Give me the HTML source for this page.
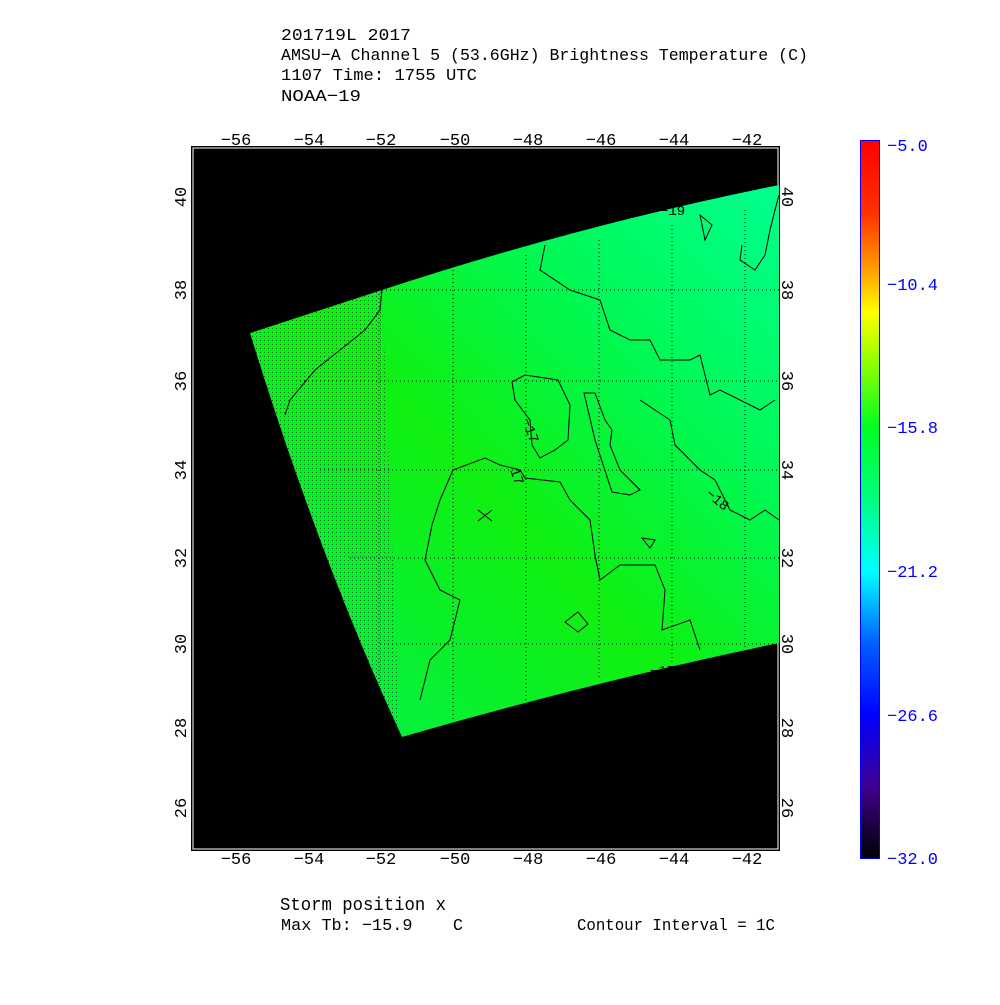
<!DOCTYPE html>
<html><head><meta charset="utf-8"><style>
body{margin:0;background:#fff;}
svg text{font-family:"Liberation Mono",monospace;white-space:pre;}
</style></head><body>
<svg width="1000" height="1000" viewBox="0 0 1000 1000" xmlns="http://www.w3.org/2000/svg">
<defs>
<linearGradient id="g1" x1="0" y1="1" x2="1" y2="0">
<stop offset="0" stop-color="#00f050"/>
<stop offset="0.45" stop-color="#10f010"/>
<stop offset="0.7" stop-color="#00f850"/>
<stop offset="1" stop-color="#00ff90"/>
</linearGradient>
<linearGradient id="cb" x1="0" y1="0" x2="0" y2="1">
<stop offset="0" stop-color="#ff0000"/>
<stop offset="0.1" stop-color="#ff3000"/>
<stop offset="0.18" stop-color="#ffa000"/>
<stop offset="0.24" stop-color="#ffff00"/>
<stop offset="0.3" stop-color="#a0ff00"/>
<stop offset="0.4" stop-color="#00ff20"/>
<stop offset="0.5" stop-color="#00ff80"/>
<stop offset="0.6" stop-color="#00ffff"/>
<stop offset="0.7" stop-color="#0060ff"/>
<stop offset="0.8" stop-color="#0000ff"/>
<stop offset="0.9" stop-color="#400090"/>
<stop offset="1" stop-color="#000000"/>
</linearGradient>
<pattern id="dots" width="4" height="4" patternUnits="userSpaceOnUse"><rect x="0" y="0" width="1" height="1" fill="#000"/></pattern>
</defs>
<g font-size="17" fill="#000">
<text x="281" y="40" textLength="130" lengthAdjust="spacingAndGlyphs">201719L 2017</text>
<text x="281" y="60" textLength="527" lengthAdjust="spacingAndGlyphs">AMSU−A Channel 5 (53.6GHz) Brightness Temperature (C)</text>
<text x="281" y="80" textLength="196" lengthAdjust="spacingAndGlyphs">1107 Time: 1755 UTC</text>
<text x="281" y="101" textLength="80" lengthAdjust="spacingAndGlyphs">NOAA−19</text>
</g>
<rect x="191" y="146" width="589" height="705" fill="#000"/>
<rect x="193" y="148" width="585" height="701" fill="none" stroke="#fff" stroke-width="1"/>
<rect x="194" y="149" width="583" height="699" fill="#000"/>
<path d="M250,333 L382,290 Q580,225 779,185 L779,643 Q600,680 402,737 Q320,560 250,333 Z" fill="url(#g1)"/>
<path d="M250,333 L382,290 L400,740 Q320,560 250,333Z" fill="url(#dots)" opacity="0.6"/>
<g stroke="#000" stroke-width="1" stroke-dasharray="1,3" fill="none">
<path d="M379,290V737M453,270V720M526,255V700M599,240V680M672,225V665M745,210V650"/>
<path d="M382,290H779M300,381H779M320,470H779M350,558H779M380,644H779"/>
</g>
<g stroke="#000" stroke-width="1" fill="none">
<path d="M382,290L380,310L365,330L340,350L315,370L290,400L285,415"/>
<path d="M453,470L485,458L500,465L520,470L525,478L560,482L570,500L590,520L595,555L600,580L620,565L655,565L665,590L662,630L690,620L700,650"/>
<path d="M453,470L440,500L432,525L425,560L440,590L460,600L450,640L430,660L420,700"/>
<path d="M512,382L525,375L558,380L570,405L568,440L555,450L540,458L532,445L530,420L515,400Z"/>
<path d="M584,393L595,393L605,420L612,430L610,445L620,470L640,490L630,495L612,492L595,440Z"/>
<path d="M545,245L540,270L570,290L600,300L610,330L630,340L650,340L660,360L690,360L700,355L710,395L720,390L740,400L760,410L775,400"/>
<path d="M742,245L740,260L755,270L765,255L770,230L775,210L779,195"/>
<path d="M640,400L670,420L675,445L700,470L715,480L730,510L750,520L765,510L779,520"/>
<path d="M700,215L705,240L712,225Z"/>
<path d="M642,538L650,548L655,540Z"/>
<path d="M565,622L578,612L588,624L578,632Z"/>
<path d="M478,510L492,521M492,510L478,521"/>
</g>
<g font-size="14" fill="#000">
<text x="522" y="420" transform="rotate(70 522 420)">−17</text>
<text x="510" y="470" transform="rotate(70 510 470)">17</text>
<text x="705" y="495" transform="rotate(40 705 495)">−18</text>
<text x="650" y="675">−17</text>
<text x="660" y="215">−19</text>
</g>
<g font-size="17" fill="#000" text-anchor="middle">
<text x="236" y="145">−56</text><text x="309" y="145">−54</text><text x="381" y="145">−52</text><text x="455" y="145">−50</text><text x="528" y="145">−48</text><text x="601" y="145">−46</text><text x="674" y="145">−44</text><text x="747" y="145">−42</text>
<text x="236" y="864">−56</text><text x="309" y="864">−54</text><text x="381" y="864">−52</text><text x="455" y="864">−50</text><text x="528" y="864">−48</text><text x="601" y="864">−46</text><text x="674" y="864">−44</text><text x="747" y="864">−42</text>
</g>
<g font-size="17" fill="#000" text-anchor="middle">
<text transform="translate(186,197) rotate(-90)">40</text>
<text transform="translate(186,290) rotate(-90)">38</text>
<text transform="translate(186,381) rotate(-90)">36</text>
<text transform="translate(186,470) rotate(-90)">34</text>
<text transform="translate(186,558) rotate(-90)">32</text>
<text transform="translate(186,644) rotate(-90)">30</text>
<text transform="translate(186,728) rotate(-90)">28</text>
<text transform="translate(186,808) rotate(-90)">26</text>
<text transform="translate(782,197) rotate(90)">40</text>
<text transform="translate(782,290) rotate(90)">38</text>
<text transform="translate(782,381) rotate(90)">36</text>
<text transform="translate(782,470) rotate(90)">34</text>
<text transform="translate(782,558) rotate(90)">32</text>
<text transform="translate(782,644) rotate(90)">30</text>
<text transform="translate(782,728) rotate(90)">28</text>
<text transform="translate(782,808) rotate(90)">26</text>
</g>
<rect x="860.5" y="140.5" width="19" height="718" fill="url(#cb)" stroke="#0000ff" stroke-width="1"/>
<g fill="#0000ff" font-size="17">
<text x="887" y="151">−5.0</text>
<text x="887" y="290">−10.4</text>
<text x="887" y="433">−15.8</text>
<text x="887" y="577">−21.2</text>
<text x="887" y="721">−26.6</text>
<text x="887" y="864">−32.0</text>
</g>
<g fill="#000">
<text x="280" y="910" font-size="18" textLength="166" lengthAdjust="spacingAndGlyphs">Storm position x</text>
<text x="281" y="930" font-size="17" textLength="182" lengthAdjust="spacingAndGlyphs">Max Tb: −15.9    C</text>
<text x="577" y="930" font-size="17" textLength="198" lengthAdjust="spacingAndGlyphs">Contour Interval = 1C</text>
</g>
</svg>
</body></html>
